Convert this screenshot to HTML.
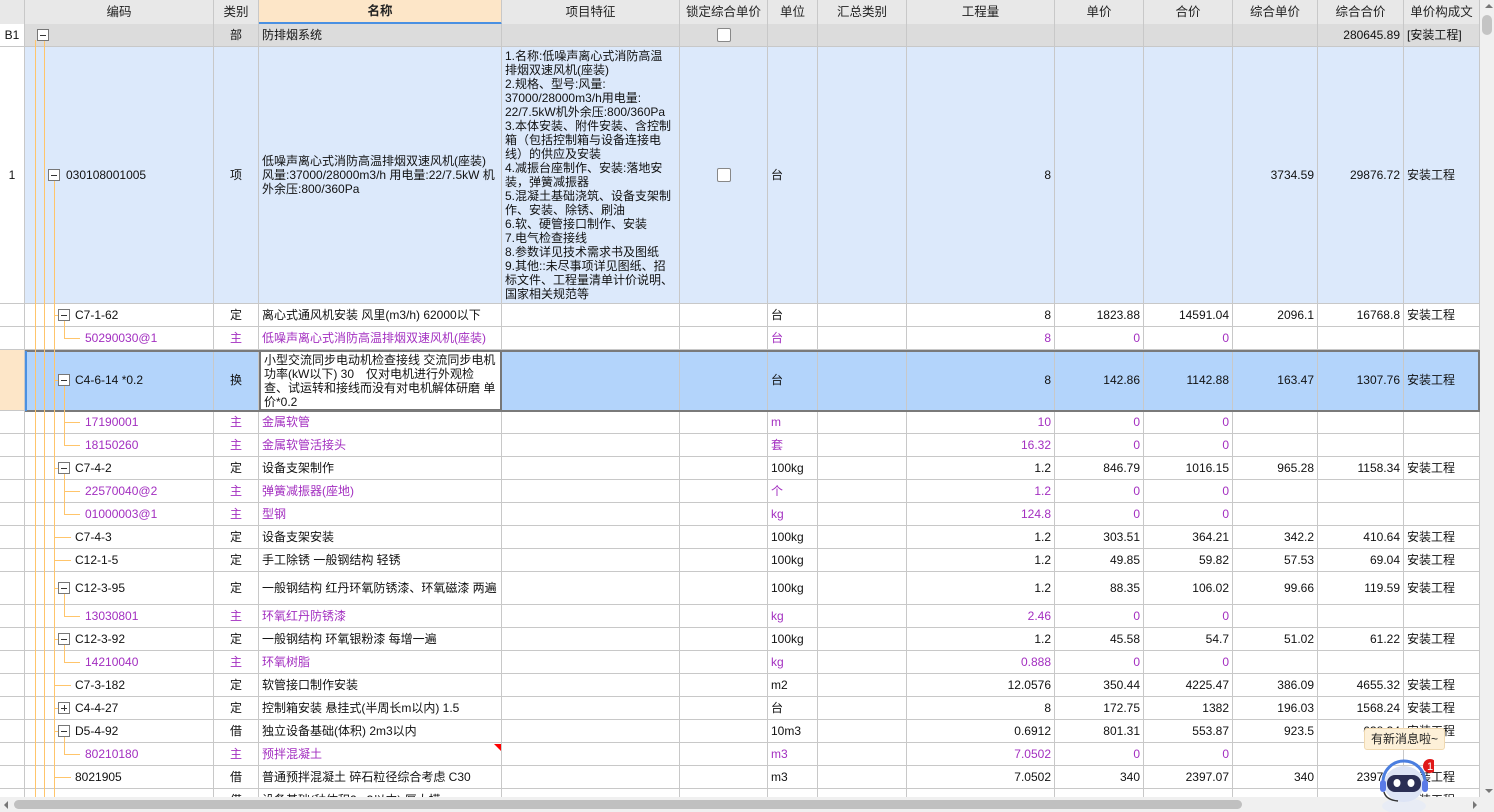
<!DOCTYPE html>
<html><head><meta charset="utf-8">
<style>
*{margin:0;padding:0;box-sizing:border-box}
body{width:1494px;height:812px;overflow:hidden;background:#fff;font-family:"Liberation Sans","Noto Sans CJK SC",sans-serif;font-size:12px;color:#111;position:relative}
.c{position:absolute;border-right:1px solid #c8c8c8;border-bottom:1px solid #c8c8c8;overflow:hidden;white-space:nowrap;line-height:14px;display:flex;align-items:center;padding:0 3px}
.r{justify-content:flex-end}.m{justify-content:center}
.h{background:#e8e8e8;justify-content:center;font-size:12.5px;color:#222}
.w{white-space:normal;align-items:center;word-break:break-all}
.p{color:#a32fc0}
.vl{position:absolute;width:1px;background:#ffc56b}
.hl{position:absolute;height:1px;background:#ffc56b}
.bx{position:absolute;width:12px;height:12px;border:1px solid #777;background:#fff}
.bx:before{content:"";position:absolute;left:2px;right:2px;top:5px;height:1px;background:#333}
.bx.pl:after{content:"";position:absolute;top:2px;bottom:2px;left:5px;width:1px;background:#333}
.cb{width:14px;height:14px;border:1px solid #888;border-radius:2px;background:#fff}
</style></head><body>
<div id="g"></div>
<script>
var X=[0,25,214,259,502,680,768,818,907,1055,1144,1233,1318,1404,1480];
var H=["","编码","类别","名称","项目特征","锁定综合单价","单位","汇总类别","工程量","单价","合价","综合单价","综合合价","单价构成文"];
var out="";
function cell(i,y,h,txt,cls,st){out+='<div class="c '+(cls||"")+'" style="left:'+X[i]+'px;top:'+y+'px;width:'+(X[i+1]-X[i])+'px;height:'+h+'px;'+(st||"")+'">'+txt+'</div>';}
for(var i=0;i<14;i++){cell(i,0,25,H[i],"h",i==3?"background:#fde6c8;font-weight:bold;border-bottom:3px solid #4a90e2":"");}
var R=[
[304,23,2,"-","C7-1-62","定","离心式通风机安装 风里(m3/h) 62000以下","","台","8","1823.88","14591.04","2096.1","16768.8","安装工程"],
[327,23,3,"","50290030@1","主","低噪声离心式消防高温排烟双速风机(座装)","","台","8","0","0","","","",1],
[350,61,2,"-","C4-6-14 *0.2","换","小型交流同步电动机检查接线 交流同步电机功率(kW以下) 30　仅对电机进行外观检查、试运转和接线而没有对电机解体研磨 单价*0.2","","台","8","142.86","1142.88","163.47","1307.76","安装工程"],
[411,23,3,"","17190001","主","金属软管","","m","10","0","0","","","",1],
[434,23,3,"","18150260","主","金属软管活接头","","套","16.32","0","0","","","",1],
[457,23,2,"-","C7-4-2","定","设备支架制作","","100kg","1.2","846.79","1016.15","965.28","1158.34","安装工程"],
[480,23,3,"","22570040@2","主","弹簧减振器(座地)","","个","1.2","0","0","","","",1],
[503,23,3,"","01000003@1","主","型钢","","kg","124.8","0","0","","","",1],
[526,23,2,"","C7-4-3","定","设备支架安装","","100kg","1.2","303.51","364.21","342.2","410.64","安装工程"],
[549,23,2,"","C12-1-5","定","手工除锈 一般钢结构 轻锈","","100kg","1.2","49.85","59.82","57.53","69.04","安装工程"],
[572,33,2,"-","C12-3-95","定","一般钢结构 红丹环氧防锈漆、环氧磁漆 两遍","","100kg","1.2","88.35","106.02","99.66","119.59","安装工程"],
[605,23,3,"","13030801","主","环氧红丹防锈漆","","kg","2.46","0","0","","","",1],
[628,23,2,"-","C12-3-92","定","一般钢结构 环氧银粉漆 每增一遍","","100kg","1.2","45.58","54.7","51.02","61.22","安装工程"],
[651,23,3,"","14210040","主","环氧树脂","","kg","0.888","0","0","","","",1],
[674,23,2,"","C7-3-182","定","软管接口制作安装","","m2","12.0576","350.44","4225.47","386.09","4655.32","安装工程"],
[697,23,2,"+","C4-4-27","定","控制箱安装 悬挂式(半周长m以内) 1.5","","台","8","172.75","1382","196.03","1568.24","安装工程"],
[720,23,2,"-","D5-4-92","借","独立设备基础(体积) 2m3以内","","10m3","0.6912","801.31","553.87","923.5","638.34","安装工程"],
[743,23,3,"","80210180","主","预拌混凝土","","m3","7.0502","0","0","","","",1],
[766,23,2,"","8021905","借","普通预拌混凝土 碎石粒径综合考虑 C30","","m3","7.0502","340","2397.07","340","2397.07","安装工程"],
[789,23,2,"","","借","设备基础(种体积2m3以内) 厚大模","","","","","","","","安装工程"]
];
cell(0,24,23,"B1","m","background:#fff");
for(var i=1;i<14;i++){var t="",c="",s="background:#dcdcdc;";
 if(i==2){t="部";c="m"} if(i==3)t="防排烟系统"; if(i==5){t='<span class="cb"></span>';c="m"} if(i==12){t="280645.89";c="r"} if(i==13)t="[安装工程]";
 cell(i,24,23,t,c,s);}
var f="1.名称:低噪声离心式消防高温排烟双速风机(座装)<br>2.规格、型号:风量:<br>37000/28000m3/h用电量:<br>22/7.5kW机外余压:800/360Pa<br>3.本体安装、附件安装、含控制箱（包括控制箱与设备连接电线）的供应及安装<br>4.减振台座制作、安装:落地安装，弹簧减振器<br>5.混凝土基础浇筑、设备支架制作、安装、除锈、刷油<br>6.软、硬管接口制作、安装<br>7.电气检查接线<br>8.参数详见技术需求书及图纸<br>9.其他::未尽事项详见图纸、招标文件、工程量清单计价说明、国家相关规范等";
var r1=["1","030108001005","项","低噪声离心式消防高温排烟双速风机(座装) 风量:37000/28000m3/h 用电量:22/7.5kW 机外余压:800/360Pa",f,'<span class="cb"></span>',"台","","8","","","3734.59","29876.72","安装工程"];
for(var i=0;i<14;i++){var c="",s=i==0?"background:#fff;":"background:#dce9fb;";
 if(i==0||i==2||i==5)c="m"; if(i>=8&&i<=12)c="r"; if(i==3||i==4)c+=" w";
 var t=r1[i]; if(i==1){t='<span style="padding-left:41px">'+t+'</span>';s+="padding:0;"} if(i==4)s+="font-size:12px;line-height:14px;align-items:flex-start;padding:2px 6px 0 3px;";
 cell(i,47,257,t,c,s);}
R.forEach(function(r){
 var sel=r[0]==350, pu=r[15];
 var bg=sel?"background:#b3d4fb;":"";
 for(var i=0;i<14;i++){var t="",c="",s=bg;
  if(i==0){s=sel?"background:#fde6c8;":"";}
  if(i==1){t='<span style="padding-left:'+(r[2]==3?60:50)+'px">'+r[4]+'</span>';s+="padding:0;"}
  if(i==2){t=r[5];c="m"} if(i==3){t=r[6];c="w"} if(i==6)t=r[8];
  if(i>=8&&i<=12){t=r[i+1];c="r"} if(i==13)t=r[14];
  if(pu&&(i>=1&&i<=3||i>=6&&i<=12))c+=" p";
  if(sel&&i==3)s="background:#fff;border:2px solid #777;";
  cell(i,r[0],r[1],t,c,s);}
});
out+='<div style="position:absolute;left:25px;top:350px;width:1455px;height:62px;border:2px solid #7a7a7a;pointer-events:none"></div><div style="position:absolute;left:25px;top:351px;width:2px;height:60px;background:#4a90e2"></div>';
out+='<div class="vl" style="left:35px;top:40px;height:757px"></div><div class="vl" style="left:44px;top:40px;height:757px"></div>';
out+='<div class="bx" style="left:37px;top:29px"></div>';
out+='<div class="vl" style="left:54px;top:181px;height:616px"></div><div class="bx" style="left:48px;top:169px"></div>';
var parentY=null;
R.forEach(function(r,k){var cy=r[0]+Math.floor(r[1]/2);
 if(r[2]==2){ if(r[3]){out+='<div class="hl" style="left:54px;top:'+cy+'px;width:5px"></div><div class="bx'+(r[3]=="+"?" pl":"")+'" style="left:58px;top:'+(cy-6)+'px"></div>';parentY=cy+6;}
  else out+='<div class="hl" style="left:54px;top:'+cy+'px;width:17px"></div>';}
 else { out+='<div class="vl" style="left:64px;top:'+parentY+'px;height:'+(cy-parentY+1)+'px"></div><div class="hl" style="left:64px;top:'+cy+'px;width:16px"></div>';}
});
out+='<div style="position:absolute;left:494px;top:744px;width:0;height:0;border-top:7px solid #f00;border-left:7px solid transparent"></div>';
document.getElementById("g").innerHTML=out;
</script>
<div style="position:absolute;left:1480px;top:0;width:14px;height:797px;background:#f0f0f0"></div>
<div style="position:absolute;left:1485px;top:4px;width:0;height:0;border-left:4px solid transparent;border-right:4px solid transparent;border-bottom:4px solid #777"></div>
<div style="position:absolute;left:1482px;top:15px;width:10px;height:20px;background:#c4c4c4;border-radius:5px"></div>
<div style="position:absolute;left:1485px;top:789px;width:0;height:0;border-left:4px solid transparent;border-right:4px solid transparent;border-top:4px solid #777"></div>
<div style="position:absolute;left:0;top:797px;width:1494px;height:15px;background:#f0f0f0"></div>
<div style="position:absolute;left:4px;top:801px;width:0;height:0;border-top:4px solid transparent;border-bottom:4px solid transparent;border-right:4px solid #777"></div>
<div style="position:absolute;left:14px;top:800px;width:1228px;height:9px;background:#c0c0c0;border-radius:5px"></div>
<div style="position:absolute;left:1473px;top:801px;width:0;height:0;border-top:4px solid transparent;border-bottom:4px solid transparent;border-left:4px solid #777"></div>
<div style="position:absolute;left:1364px;top:728px;width:81px;height:22px;background:#fdf0d8;border:1px solid #f0d9b0;border-radius:3px;font-size:12px;line-height:20px;text-align:center;color:#222">有新消息啦~</div>
<svg style="position:absolute;left:1374px;top:756px" width="60" height="56" viewBox="0 0 60 56">
<ellipse cx="30" cy="50" rx="22" ry="8" fill="#e8ecf5"/>
<path d="M9 26a21 21 0 0 1 42 0" fill="none" stroke="#4a7ee0" stroke-width="3"/>
<ellipse cx="30" cy="28" rx="20" ry="18" fill="#dde4f5"/>
<rect x="13" y="19" width="34" height="17" rx="8" fill="#2b2f55"/>
<ellipse cx="23" cy="27" rx="3.5" ry="4" fill="#fff"/><ellipse cx="37" cy="27" rx="3.5" ry="4" fill="#fff"/>
<rect x="6" y="24" width="6" height="12" rx="3" fill="#5a7ae8"/><rect x="48" y="24" width="6" height="12" rx="3" fill="#5a7ae8"/>
<path d="M10 36q2 8 14 9" fill="none" stroke="#333" stroke-width="1.5"/>
<circle cx="56" cy="10" r="7" fill="#e01818"/><text x="56" y="14" font-size="11" fill="#fff" text-anchor="middle" font-family="Liberation Sans">1</text>
</svg>
</body></html>
